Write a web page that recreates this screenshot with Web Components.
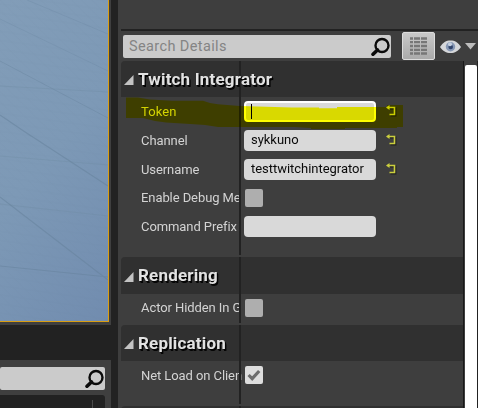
<!DOCTYPE html>
<html lang="en"><head><meta charset="utf-8"><title>Details</title>
<style>
html,body{margin:0;height:100%;overflow:hidden;background:#222}
body{font-family:Roboto,"Liberation Sans",sans-serif}
</style></head><body>
<editor-app></editor-app>
<script>
const define=(name,html,setup)=>customElements.define(name,class extends HTMLElement{
  connectedCallback(){
    if(this.shadowRoot)return;
    const root=this.attachShadow({mode:'open'});
    const t=document.createElement('template');
    t.innerHTML='<style>*{box-sizing:border-box}svg{display:block}</style>'+html;
    root.append(t.content.cloneNode(true));
    if(setup)setup(this,root);
  }
});

define('scene-view',`<style>
:host{display:block;height:325px;padding:0 2px 3px 0;background:#3f3f3f}
div{height:322px;border:solid #d99e12;border-width:0 1px 1px 0;overflow:hidden;
background:linear-gradient(130deg,#829db8 0%,#7d99b6 48%,#718caf 100%)}
</style><div><svg width="108" height="321" viewBox="0 0 108 321" fill="none">
<defs><pattern id="g" width="12" height="9" patternUnits="userSpaceOnUse" patternTransform="rotate(8)"><path d="M0 0L12 9M0 4H12" stroke="#5c7894" stroke-width=".5" opacity=".15"/></pattern></defs>
<path d="M0 0H108V321H0Z" fill="url(#g)"/>
<g stroke="#65819b" opacity=".5"><path d="M27 0L108 34M0 19L108 71" stroke-width=".8" opacity=".6"/><path d="M0 61L108 118" stroke-width=".9" opacity=".8"/><path d="M0 115L31 136M19 128L108 186M0 197L108 280" stroke-width="1.3"/><path d="M0 266L108 277" stroke-width="1.2"/></g>
<g stroke="#6c8a9f" opacity=".28"><path d="M0 86L108 92M0 156L108 165M0 204L108 216"/></g></svg></div>`);

define('search-box',`<style>
:host{display:flex;align-items:center;justify-content:space-between;height:23px;background:#cbcbcb;border-radius:2px;padding:0 1px 0 6px;color:#848484;font-size:14.5px;letter-spacing:.38px;line-height:21px}
span{padding-bottom:1px;white-space:nowrap}
</style><span><slot></slot></span><svg width="19" height="20" viewBox="0 0 19 20" fill="none" stroke="#0b0b0b"><circle cx="11" cy="8.5" r="6.5" stroke-width="2.4"/><path d="M6.5 13L2 17.2" stroke-width="3.6" stroke-linecap="round"/></svg>`);

define('lower-panel',`<style>
:host{display:flex;flex-direction:column;gap:5px;height:48px;margin-top:35px;padding:7px 6px 0 0;background:#3f3f3f}
.list{height:13px;background:#222;border-radius:0 3px 0 0;display:flex;justify-content:flex-end;padding:5px 12px 0 0}
i{width:1px;background:#4b4b4b}
</style><search-box></search-box><div class="list"><i></i></div>`);

define('panel-tools',`<style>
:host{display:flex;align-items:flex-start;height:30px;padding:1px 2px 0 2px;width:357px}
search-box{width:268px;margin:3px 11px 0 0;flex:none}
.grid{width:33px;height:28px;border:1px solid #dcdcdc;border-radius:2px;background:linear-gradient(#c9c9c9,#aaa);padding:4px 0 0 7px;flex:none}
.eye{margin:7px 0 0 5px;flex:none}.caret{margin:11px 0 0 4px;flex:none}
</style><search-box><slot></slot></search-box><div class="grid"><svg width="18" height="19" viewBox="0 0 18 19"><path stroke="#777" stroke-width="2.3" stroke-dasharray="3 1 6 1 6 1" d="M0 1.5H17M0 5.2H17M0 9H17M0 12.8H17M0 16.5H17"/></svg></div>
<svg class="eye" width="21" height="15" viewBox="0 0 21 15"><path d="M0 8C3 3.4 6 1.5 10.5 1.5S18 3.4 21 8C18 12.2 15 14 10.5 14S3 12.2 0 8Z" fill="#d5d7da"/><circle cx="10.5" cy="7.7" r="4.7" fill="#8798b5"/><circle cx="10.7" cy="8" r="2.3" fill="#31446b"/><circle cx="10" cy="5.3" r="2" fill="#c4cfdf"/></svg>
<svg class="caret" width="11" height="7" viewBox="0 0 11 7"><path d="M0 0H11L5.5 6.5Z" fill="#bdbdbd"/></svg>`);

define('group-head',`<style>
:host{display:flex;align-items:center;height:var(--h,36px);background:#303030;border-radius:4px 0 0 0;padding:0 0 1px 3px;gap:4px;color:#e2e2e2;font-size:17px;font-weight:700;letter-spacing:.18px;text-shadow:1px 1px #050505,1.5px 2px #050505}
svg{margin-top:3px}span{position:relative;z-index:1}
</style><svg width="10" height="10" viewBox="0 0 10 10"><path d="M9.5 0V10H0Z" fill="#c3c3c3"/></svg><span><slot></slot></span>`);

define('prop-row',`<style>
:host{display:flex;height:var(--h,29px);padding-top:4px;color:#d3d3d3;font-size:13px;letter-spacing:var(--track,-.08px);line-height:21px}
.name{width:98px;margin-left:20px;margin-right:5px;white-space:nowrap;flex:none}
.name{margin-top:var(--shift,0px)}
</style><div class="name"></div><slot></slot>`,(el,r)=>{r.querySelector('.name').textContent=el.getAttribute('name')});

define('text-field',`<style>
:host{display:flex;gap:10px;align-items:flex-start;color:#0a0a0a;font-size:13px;letter-spacing:-.03px;line-height:20px}
.box{width:132px;height:21px;border-radius:4px;background:#d9d9d9;padding-left:7px;white-space:nowrap}
:host([active]) .box{border:2px solid #fff;padding:1px 0 0 5px}
i{display:block;width:1px;height:15px;background:#000}
svg,i{visibility:hidden}:host([reset]) svg,:host([active]) i{visibility:visible}
:host(:not([active])) i{display:none}
svg{margin-top:4px}
</style><div class="box"><i></i><slot></slot></div><svg width="12" height="12" viewBox="0 0 12 12" fill="none"><path d="M4 3.5H9.5V10.5H4.5" stroke="#202020" stroke-width="1.8"/><path d="M1.5 2.5H8.5V9.5H3.5" stroke="#cbcf3e" stroke-width="1.6"/><path d="M0 2.5L3.5 0V5Z" fill="#cbcf3e"/></svg>`);

define('check-box',`<style>
:host{display:block;width:18px;height:18px;margin:1px 0 0 1px;border-radius:2px;background:#aeaeae;flex:none}
:host([checked]){background:#dedede}svg{display:none}:host([checked]) svg{display:block}
</style><svg width="18" height="18" viewBox="0 0 18 18" fill="none"><path d="M3.6 9L7.2 12.7L14.2 5" stroke="#6d6d6d" stroke-width="3.2"/></svg>`);

define('marker-stroke',`<style>
:host{position:absolute;left:5px;top:36px;mix-blend-mode:multiply;pointer-events:none}
</style><svg width="278" height="33" viewBox="126 97 278 33"><path d="M126 97.5H138L150 99.5L172 100.8H203L210 103L218 104.2L240 106L292 107.5H319V108.2H337V107H387V105H403V127H397V128H345V129H311V128L294 127H218L205 125L190 124L166 122.5L155 121L143 118H126Z" fill="#ff0"/></svg>`);

define('details-list',`<style>
:host{display:grid;grid-template-columns:342px 15px;height:347px;overflow:hidden}
main{position:relative;isolation:isolate;background:#3e3e3e}
.rule{position:absolute;left:118px;top:0;width:2px;height:347px;background:linear-gradient(#222 0 194px,#3e3e3e 194px 196px,#222 196px 262px,#3e3e3e 262px 264px,#222 264px 343px,#3e3e3e 343px 345px,#222 345px)}
.bar{border-left:1px solid #181818;border-right:1px solid #222;padding:4px 0 0 1px}
.thumb{width:12px;height:350px;background:#fff;border-radius:2px 2px 0 0}
</style><main>
<group-head>Twitch Integrator</group-head>
<prop-row name="Token" style="--track:.1px"><text-field active reset></text-field></prop-row>
<prop-row name="Channel"><text-field reset>sykkuno</text-field></prop-row>
<prop-row name="Username"><text-field reset>testtwitchintegrator</text-field></prop-row>
<prop-row name="Enable Debug Me" style="--h:28px;--shift:-1px"><check-box></check-box></prop-row>
<prop-row name="Command Prefix" style="--h:45px"><text-field></text-field></prop-row>
<group-head style="--h:37px">Rendering</group-head>
<prop-row name="Actor Hidden In G" style="--h:31px;--shift:-1px"><check-box></check-box></prop-row>
<group-head>Replication</group-head>
<prop-row name="Net Load on Clien" style="--h:45px"><check-box checked></check-box></prop-row>
<group-head></group-head>
<div class="rule"></div><marker-stroke></marker-stroke></main>
<div class="bar"><div class="thumb"></div></div>`);

define('details-panel',`<style>
:host{display:block;background:#3e3e3e;padding:29px 0 0 3px;height:408px;overflow:hidden}
.top{height:2px;background:#222}
</style><div class="top"></div><panel-tools>Search Details</panel-tools><details-list></details-list>`);

define('editor-app',`<style>
:host{display:grid;grid-template-columns:111px 360px;gap:7px;width:478px;height:408px;background:#222;overflow:hidden}
</style><div><scene-view></scene-view><lower-panel></lower-panel></div><details-panel></details-panel>`);
</script></body></html>
